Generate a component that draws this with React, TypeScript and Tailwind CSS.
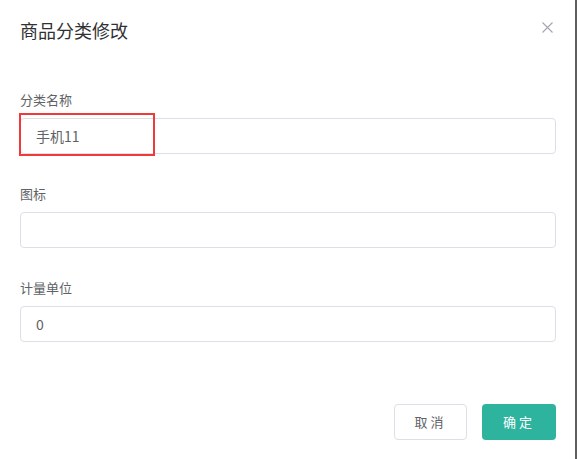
import React from 'react';

const font = { fontFamily: '"Noto Sans CJK SC", "Liberation Sans", sans-serif' };

const Field: React.FC<{ label: string; value?: string; highlight?: boolean }> = ({ label, value, highlight }) => (
  <div className="flex flex-col">
    <label className="h-[18px] text-[13px] leading-[18px] text-[#606266]">{label}</label>
    <div className="relative mt-[9px]">
      <input
        readOnly
        value={value ?? ''}
        className="h-[36px] w-full rounded-[4px] border border-[#dcdfe6] bg-white px-[15px] text-[14px] text-[#606266] outline-none"
      />
      {highlight && (
        <div className="pointer-events-none absolute left-[-1px] top-[-5px] h-[43px] w-[136px] border-2 border-[#f03a3a]" />
      )}
    </div>
  </div>
);

export default function App() {
  return (
    <div className="flex h-[459px] w-[577px] bg-white" style={font}>
      <div className="flex flex-1 flex-col">
        <div className="flex items-center justify-between pl-5 pr-[19px] pt-[18px]">
          <h2 className="text-[18px] leading-6 text-[#303133]">商品分类修改</h2>
          <svg width="11" height="11" viewBox="0 0 11 11" className="mr-[3px] mt-[-6px]">
            <path d="M0.5 0.5L10.5 10.5M10.5 0.5L0.5 10.5" stroke="#a3a6ad" strokeWidth="1.1" />
          </svg>
        </div>
        <div className="mt-[49px] flex flex-col gap-[31px] pl-5 pr-[19px]">
          <Field label="分类名称" value="手机11" highlight />
          <Field label="图标" />
          <Field label="计量单位" value="0" />
        </div>
        <div className="mt-[62px] flex justify-end gap-[15px] pl-5 pr-[19px]">
          <button className="h-[36px] w-[73px] rounded-[4px] border border-[#dcdfe6] bg-white text-[13px] tracking-[3px] text-[#606266]">
            取消
          </button>
          <button className="h-[36px] w-[74px] rounded-[4px] bg-[#2db39e] text-[13px] tracking-[3px] text-white">
            确定
          </button>
        </div>
      </div>
      <div className="w-[2px] bg-[#5f5f5f]" />
    </div>
  );
}
